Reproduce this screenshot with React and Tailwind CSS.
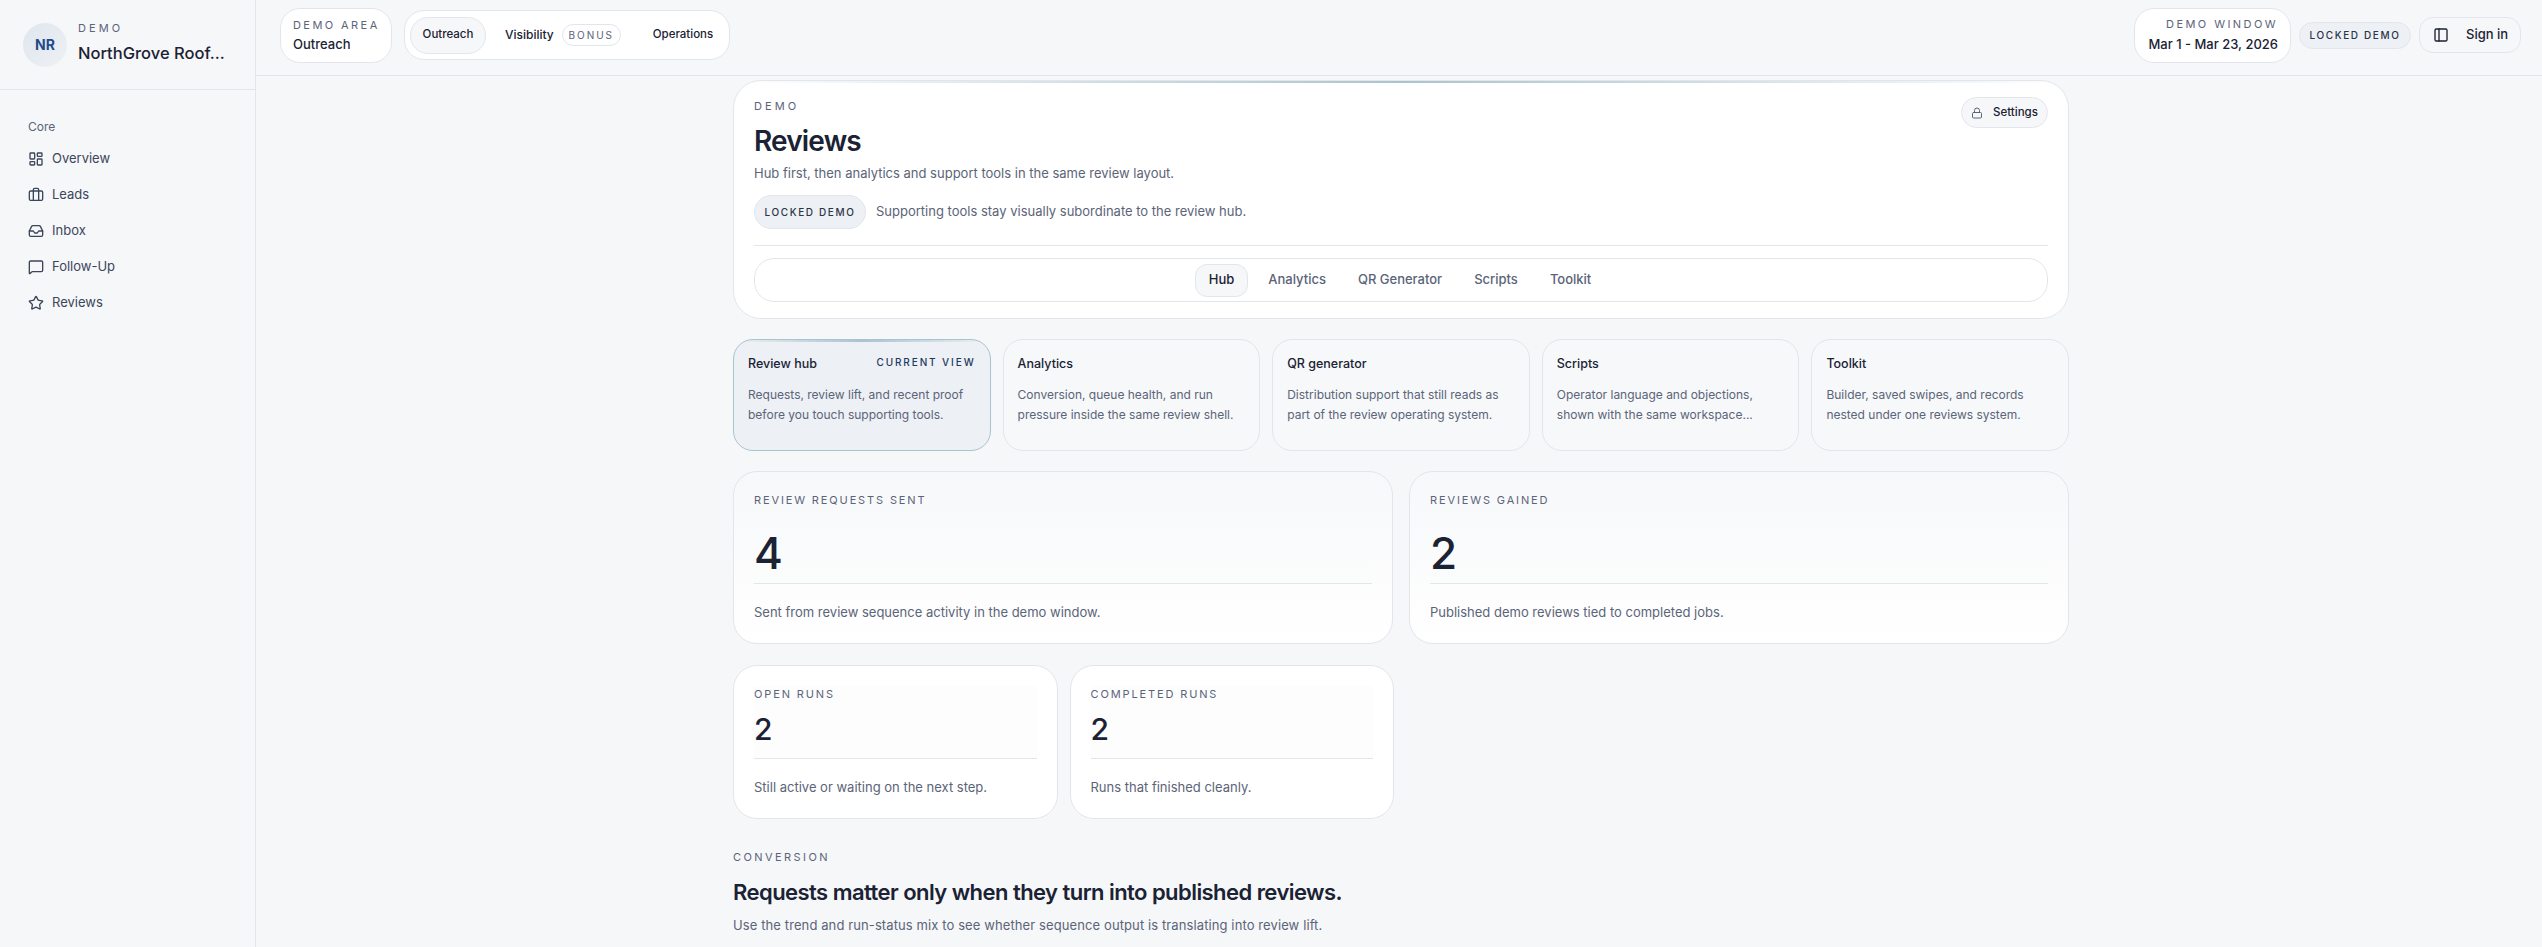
import { Briefcase, Inbox, LayoutDashboard, Lock, MessageSquare, PanelLeft, Star } from 'lucide-react';

const NAV = [
  { label: 'Overview', icon: LayoutDashboard },
  { label: 'Leads', icon: Briefcase },
  { label: 'Inbox', icon: Inbox },
  { label: 'Follow-Up', icon: MessageSquare },
  { label: 'Reviews', icon: Star },
];

const SECTIONS = [
  { title: 'Review hub', text: 'Requests, review lift, and recent proof before you touch supporting tools.', current: true },
  { title: 'Analytics', text: 'Conversion, queue health, and run pressure inside the same review shell.' },
  { title: 'QR generator', text: 'Distribution support that still reads as part of the review operating system.' },
  { title: 'Scripts', text: 'Operator language and objections, shown with the same workspace...' },
  { title: 'Toolkit', text: 'Builder, saved swipes, and records nested under one reviews system.' },
];

function BigMetric({ label, value, text }) {
  return (
    <div className="h-[173px] rounded-[24px] border border-[#e2e6ec] bg-gradient-to-b from-[#f7f8fa] to-white p-5">
      <div className="h-[92px] border-b border-[#e2e6ec] bg-gradient-to-b from-[#f8f9fb] to-[#fbfcfc]">
        <div className="text-[11px] leading-4 tracking-[0.17em] uppercase text-[#5b6478]">{label}</div>
        <div className="mt-[19px] text-[44px] leading-[52px] font-medium text-[#1a2233]">{value}</div>
      </div>
      <p className="mt-[18px] text-[13px] leading-5 text-[#5b6478]">{text}</p>
    </div>
  );
}

function SmallMetric({ label, value, text }) {
  return (
    <div className="h-[154px] rounded-[24px] border border-[#e2e6ec] bg-white p-5">
      <div className="h-[73px] border-b border-[#e2e6ec] bg-[#fdfdfe]">
        <div className="text-[11px] leading-4 tracking-[0.17em] uppercase text-[#5b6478]">{label}</div>
        <div className="mt-[9px] text-[30px] leading-9 font-medium text-[#1a2233]">{value}</div>
      </div>
      <p className="mt-[18px] text-[13px] leading-5 text-[#5b6478]">{text}</p>
    </div>
  );
}

export default function App() {
  return (
    <div className="flex h-[947px] overflow-hidden bg-[#f6f7f9] font-['Inter',sans-serif] text-[#1a2233]">
      <aside className="w-[256px] shrink-0 border-r border-[#e2e6ec]">
        <div className="flex h-[90px] items-center gap-[11px] border-b border-[#e2e6ec] pl-[23px] pr-2">
          <div className="flex h-[44px] w-[44px] shrink-0 items-center justify-center rounded-full bg-gradient-to-br from-[#dfe6ee] to-[#eef1f5] text-[14px] font-bold text-[#1f4a8d]">NR</div>
          <div className="min-w-0 pb-[5px]">
            <div className="text-[11px] leading-4 tracking-[0.28em] text-[#5b6478]">DEMO</div>
            <div className="mt-[5px] whitespace-nowrap text-[16.5px] leading-6 font-medium">NorthGrove Roof...</div>
          </div>
        </div>
        <div className="px-7 pt-[29px]">
          <div className="text-[12px] leading-4 text-[#5b6478]">Core</div>
          <nav className="mt-[6px] flex flex-col">
            {NAV.map(({ label, icon: Icon }) => (
              <div key={label} className="flex h-9 items-center gap-2 text-[13px] text-[#3c465a]">
                <Icon size={16} strokeWidth={2} className="text-[#3c465a]" />
                {label}
              </div>
            ))}
          </nav>
        </div>
      </aside>

      <div className="min-w-0 flex-1">
        <header className="flex h-[76px] items-center justify-between border-b border-[#e2e6ec] pb-[5px] pl-6 pr-[21px]">
          <div className="flex items-center gap-3">
            <div className="flex h-[55px] w-[112px] flex-col justify-center rounded-[20px] border border-[#e2e6ec] bg-white pl-3">
              <div className="pt-[1px] text-[11px] leading-4 tracking-[0.22em] text-[#5b6478]">DEMO AREA</div>
              <div className="mt-[1px] text-[13px] leading-5 font-medium">Outreach</div>
            </div>
            <div className="flex h-[50px] w-[326px] items-center rounded-[20px] border border-[#e2e6ec] bg-white pl-[5px]">
              <div className="flex h-[37px] w-[76px] items-center justify-center rounded-[18px] border border-[#e2e6ec] bg-[#f6f7f9] text-[11.5px] font-medium">Outreach</div>
              <div className="ml-[19px] text-[12px] font-medium">Visibility</div>
              <div className="ml-2 flex h-[22px] w-[59px] items-center justify-center rounded-full border border-[#e2e6ec] text-[10px] tracking-[0.2em] text-[#5b6478]">BONUS</div>
              <div className="ml-[32px] text-[11.5px] font-medium">Operations</div>
            </div>
          </div>
          <div className="flex items-center gap-2">
            <div className="flex h-[55px] w-[157px] flex-col justify-center rounded-[20px] border border-[#e2e6ec] bg-white pr-3 text-right">
              <div className="text-[11px] leading-4 tracking-[0.22em] text-[#5b6478]">DEMO WINDOW</div>
              <div className="mt-[2px] text-[13px] leading-5 font-medium">Mar 1 - Mar 23, 2026</div>
            </div>
            <div className="flex h-[27px] w-[112px] items-center justify-center rounded-full border border-[#e2e6ec] bg-[#edf0f4] text-[10px] font-medium tracking-[0.16em] text-[#2b3548]">LOCKED DEMO</div>
            <div className="flex h-9 w-[102px] items-center gap-[17px] rounded-[14px] border border-[#e2e6ec] pl-[13px] text-[13px] font-medium">
              <PanelLeft size={16} strokeWidth={2} />
              Sign in
            </div>
          </div>
        </header>

        <main className="ml-[477px] w-[1336px] pt-1">
          <section className="relative h-[239px] overflow-hidden rounded-[28px] border border-[#e2e6ec] bg-white px-5 pt-[17px]">
            <div className="absolute inset-x-0 top-0 h-[2px] bg-gradient-to-r from-transparent via-[#a9c4cf] to-transparent" />
            <div className="absolute right-5 top-4 flex h-[31px] w-[87px] items-center justify-center gap-[10px] rounded-full border border-[#e2e6ec] bg-[#f6f7f9] text-[11.5px] font-medium">
              <Lock size={12} strokeWidth={2} className="text-[#5b6478]" />
              Settings
            </div>
            <div className="text-[11px] leading-4 tracking-[0.28em] text-[#5b6478]">DEMO</div>
            <h1 className="mt-[7px] text-[28px] leading-10 font-semibold tracking-[-0.03em]">Reviews</h1>
            <p className="mt-[2px] text-[13px] leading-5 text-[#5b6478]">Hub first, then analytics and support tools in the same review layout.</p>
            <div className="mt-3 flex items-center gap-[10px]">
              <div className="flex h-[34px] w-[112px] items-center justify-center rounded-full border border-[#e2e6ec] bg-[#edf0f4] text-[10px] font-medium tracking-[0.16em] text-[#2b3548]">LOCKED DEMO</div>
              <span className="text-[13px] text-[#5b6478]">Supporting tools stay visually subordinate to the review hub.</span>
            </div>
            <div className="mt-4 border-t border-[#e2e6ec] pt-3">
              <div className="flex h-[44px] items-center justify-center gap-2 rounded-[20px] border border-[#e2e6ec] pr-[4px] text-[13px] font-medium text-[#5b6478]">
                <div className="flex h-[33px] items-center rounded-[12px] border border-[#e2e6ec] bg-[#f6f7f9] px-[13px] text-[#1a2233]">Hub</div>
                <span className="px-3">Analytics</span>
                <span className="px-3">QR Generator</span>
                <span className="px-3">Scripts</span>
                <span className="px-3">Toolkit</span>
              </div>
            </div>
          </section>

          <section className="mt-5 grid grid-cols-5 gap-3">
            {SECTIONS.map((s) => (
              <div key={s.title} className={s.current ? 'relative h-[112px] overflow-hidden rounded-[20px] border border-[#a9c4cf] bg-[#edf0f5] px-[14px] pt-[14px]' : 'h-[112px] rounded-[20px] border border-[#e2e6ec] bg-[#f6f8fa] px-[14px] pt-[14px]'}>
                {s.current && <div className="absolute inset-x-0 top-0 h-[2px] bg-gradient-to-r from-transparent via-[#a9c4cf] to-transparent" />}
                <div className="flex items-start justify-between">
                  <div className="text-[12.5px] leading-5 font-medium">{s.title}</div>
                  {s.current && <div className="text-[10px] leading-4 font-medium tracking-[0.19em] text-[#1f3a5f]">CURRENT VIEW</div>}
                </div>
                <p className="mt-[11px] text-[12px] leading-5 text-[#5b6478]">{s.text}</p>
              </div>
            ))}
          </section>

          <section className="mt-5 grid grid-cols-2 gap-4">
            <BigMetric label="Review requests sent" value="4" text="Sent from review sequence activity in the demo window." />
            <BigMetric label="Reviews gained" value="2" text="Published demo reviews tied to completed jobs." />
          </section>

          <section className="mt-[21px] grid w-[661px] grid-cols-2 gap-3">
            <SmallMetric label="Open runs" value="2" text="Still active or waiting on the next step." />
            <SmallMetric label="Completed runs" value="2" text="Runs that finished cleanly." />
          </section>

          <section className="mt-[30px]">
            <div className="text-[11px] leading-4 tracking-[0.22em] text-[#5b6478]">CONVERSION</div>
            <h2 className="mt-[11px] text-[22px] leading-8 font-semibold tracking-tight">Requests matter only when they turn into published reviews.</h2>
            <p className="mt-[7px] text-[13px] leading-5 tracking-[0.008em] text-[#5b6478]">Use the trend and run-status mix to see whether sequence output is translating into review lift.</p>
          </section>
        </main>
      </div>
    </div>
  );
}
